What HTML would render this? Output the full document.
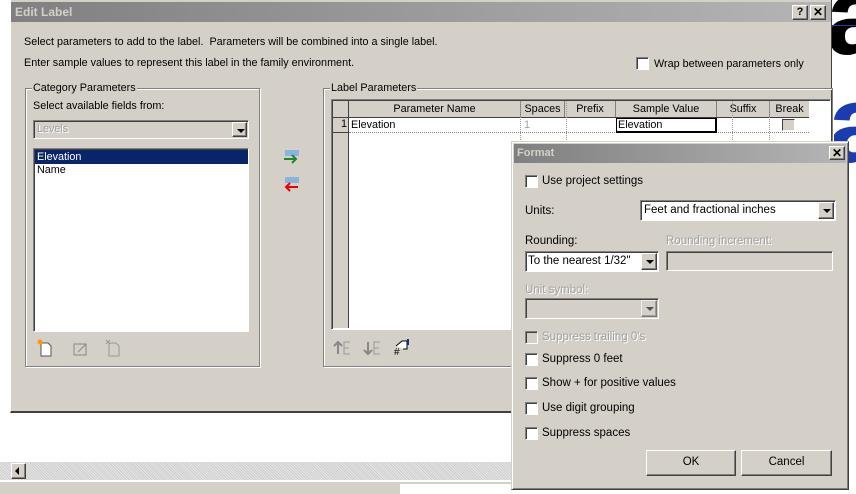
<!DOCTYPE html>
<html><head><style>
*{box-sizing:border-box;margin:0;padding:0}
body{width:856px;height:494px;overflow:hidden;background:#fff;position:relative;font-family:"Liberation Sans",sans-serif;font-size:10.8px;color:#000}
.a{position:absolute}
.sunk{border:1px solid;border-color:#808080 #fff #fff #808080;box-shadow:inset 1px 1px 0 #404040}
.raised{border:1px solid;border-color:#fff #404040 #404040 #fff;background:#d4d0c8;box-shadow:inset -1px -1px 0 #808080}
.grp{border:1px solid #808080;box-shadow:1px 1px 0 #fff, inset 1px 1px 0 #fff}
.lg{position:absolute;top:-7px;left:6px;background:#d4d0c8;padding:0 1px}
.cb{position:absolute;width:13px;height:13px;background:#fff;border:1px solid;border-color:#808080 #fff #fff #808080;box-shadow:inset 1px 1px 0 #404040}
.f{font-size:11.5px}
.dis{color:#a0a0a0;text-shadow:1px 1px 0 #fff}
.arr{position:absolute;width:16px;height:17px;top:1px;right:1px}
.arr:after{content:"";position:absolute;left:4px;top:6px;border:4px solid transparent;border-top:4px solid #000;border-bottom:0}
</style></head><body>
<div class="a" style="left:832px;top:0;width:24px;height:62px;overflow:hidden"><div class="a" style="left:-6px;top:-38px;font:bold 110px 'Liberation Sans';color:#000;line-height:110px">a</div></div>
<div class="a" style="left:832px;top:25px;width:24px;height:1px;background:#1a3cb0"></div>
<div class="a" style="left:832px;top:95px;width:24px;height:70px;overflow:hidden"><div class="a" style="left:-4px;top:-25px;font:bold 110px 'Liberation Sans';color:#1a3cb0;line-height:110px">a</div></div>
<div class="a" style="left:0;top:462px;width:511px;height:18px;background:repeating-linear-gradient(45deg,#e4e4e4 0 1px,#cfcfcf 1px 2px)"></div>
<div class="a raised" style="left:11px;top:463px;width:15px;height:16px"></div>
<div class="a" style="left:15px;top:467px;border:4px solid transparent;border-right:4px solid #000;border-left:0"></div>
<div class="a" style="left:0;top:481px;width:511px;height:13px;background:#d4d0c8;border-top:1px solid #fff"></div>
<div class="a" style="left:400px;top:484px;width:111px;height:10px;background:#fff"></div>

<div class="a" style="left:10px;top:0;width:822px;height:413px;background:#d4d0c8;border-right:1px solid #404040;border-bottom:2px solid #404040;border-left:1px solid #fff"></div>
<div class="a" style="left:11px;top:2px;width:820px;height:20px;background:linear-gradient(90deg,#808080,#b5b5b5);color:#d4d0c8;font-weight:bold;padding:3px 0 0 4px;font-size:12px">Edit Label</div>
<div class="a raised" style="left:792px;top:5px;width:16px;height:15px;font-weight:bold;text-align:center;line-height:12px;font-size:11px">?</div>
<div class="a raised" style="left:810px;top:5px;width:16px;height:15px;font-weight:bold;text-align:center;line-height:12px;font-size:12px">✕</div>
<div class="a" style="left:24px;top:36px">Select parameters to add to the label.&nbsp; Parameters will be combined into a single label.</div>
<div class="a" style="left:24px;top:57px">Enter sample values to represent this label in the family environment.</div>
<div class="cb" style="left:636px;top:57px"></div>
<div class="a" style="left:654px;top:58px">Wrap between parameters only</div>

<div class="a grp" style="left:25px;top:88px;width:235px;height:279px"><span class="lg">Category Parameters</span></div>
<div class="a" style="left:33px;top:100px">Select available fields from:</div>
<div class="a sunk" style="left:33px;top:120px;width:216px;height:19px;background:#d4d0c8;padding:2px 3px" ><span class="dis">Levels</span><div class="raised arr" style="width:15px;height:15px"></div></div>
<div class="a sunk" style="left:33px;top:148px;width:216px;height:184px;background:#fff">
<div style="background:#0a246a;color:#fff;margin:1px 0 0 1px;padding:1px 2px;height:14px">Elevation</div>
<div style="padding:0 3px">Name</div></div>
<svg class="a" style="left:36px;top:339px" width="100" height="20">
<path d="M5 4h7l3 3v10H5z" fill="#fff" stroke="#555"/><circle cx="4" cy="3" r="2.5" fill="#f90"/>
<rect x="38" y="5" width="12" height="11" fill="none" stroke="#888"/><path d="M42 13l8-8" stroke="#888"/>
<path d="M73 4h7l3 3v10H73z" fill="none" stroke="#999"/><path d="M70 1l4 4M74 1l-4 4" stroke="#999"/>
</svg>
<svg class="a" style="left:283px;top:148px" width="20" height="45">
<rect x="2" y="2" width="14" height="6" fill="#8ab4e0"/><path d="M1 11h12M9 7l4 4-4 4" stroke="#1a8a2a" stroke-width="2" fill="none"/>
<rect x="2" y="29" width="14" height="6" fill="#8ab4e0"/><path d="M15 39H3M7 35l-4 4 4 4" stroke="#e00" stroke-width="2" fill="none"/>
</svg>

<div class="a grp" style="left:323px;top:88px;width:510px;height:279px"><span class="lg">Label Parameters</span></div>
<div class="a sunk" style="left:331px;top:99px;width:500px;height:231px;background:#fff"></div>
<div class="a" style="left:333px;top:101px;width:16px;height:227px;background:#d4d0c8;border-right:1px solid #404040"></div>
<div class="a" style="left:349px;top:101px;width:460px;height:17px;background:#d4d0c8;border-bottom:1px solid #404040;display:flex">
<div style="width:172px;text-align:center;border-right:1px solid #808080;padding-top:2px">Parameter Name</div>
<div style="width:44px;text-align:center;border-right:1px solid #808080;padding-top:2px">Spaces</div>
<div style="width:51px;text-align:center;border-right:1px solid #808080;padding-top:2px">Prefix</div>
<div style="width:101px;text-align:center;border-right:1px solid #808080;padding-top:2px">Sample Value</div>
<div style="width:53px;text-align:center;border-right:1px solid #808080;padding-top:2px">Suffix</div>
<div style="width:39px;text-align:center;padding-top:2px">Break</div></div>
<div class="a" style="left:333px;top:101px;width:16px;height:17px;border-bottom:1px solid #404040"></div>
<div class="a" style="left:333px;top:118px;width:16px;height:15px;text-align:right;padding-right:2px;border-bottom:1px solid #404040">1</div>
<div class="a" style="left:349px;top:118px;width:460px;height:15px;border-bottom:1px dotted #808080">
<span class="a" style="left:2px;top:1px">Elevation</span>
<span class="a dis" style="left:175px;top:1px">1</span>
<div class="a" style="left:267px;top:0;width:101px;height:15px;border:1px solid #000;border-right-width:2px;border-bottom-width:2px;padding-left:1px">Elevation</div>
<div class="a" style="left:433px;top:1px;width:13px;height:12px;border:1px solid;border-color:#404040 #fff #fff #404040;background:#d4d0c8"></div>
</div>
<div class="a" style="left:520px;top:101px;width:1px;height:227px;border-left:1px dotted #999"></div>
<div class="a" style="left:566px;top:101px;width:1px;height:227px;border-left:1px dotted #999"></div>
<div class="a" style="left:732px;top:101px;width:1px;height:227px;border-left:1px dotted #999"></div>
<div class="a" style="left:769px;top:101px;width:1px;height:227px;border-left:1px dotted #999"></div>
<svg class="a" style="left:333px;top:338px" width="90" height="20">
<path d="M5 4v12M1 8l4-4 4 4" stroke="#888" stroke-width="2" fill="none"/><path d="M17 4h-6v12h6M11 10h5" stroke="#999" fill="none"/>
<path d="M35 4v12M31 12l4 4 4-4" stroke="#888" stroke-width="2" fill="none"/><path d="M47 4h-6v12h6M41 10h5" stroke="#999" fill="none"/>
<path d="M63 8l6-5h5v8h-4" stroke="#000" fill="#fff"/><rect x="74" y="1" width="2" height="6" fill="#1a2a8a"/><text x="61" y="17" font-size="10">#</text>
</svg>

<div class="a" style="left:511px;top:141px;width:338px;height:349px;background:#d4d0c8;border:1px solid;border-color:#d4d0c8 #404040 #404040 #d4d0c8;box-shadow:inset 1px 1px 0 #fff,inset -1px -1px 0 #808080"></div>
<div class="a" style="left:514px;top:144px;width:332px;height:19px;background:linear-gradient(90deg,#808080,#b5b5b5);color:#d4d0c8;font-weight:bold;padding:3px 0 0 3px;font-size:11px">Format</div>
<div class="a raised" style="left:829px;top:146px;width:16px;height:14px;font-weight:bold;text-align:center;line-height:12px;font-size:12px">✕</div>
<div class="f">
<div class="cb" style="left:525px;top:175px"></div><div class="a" style="left:542px;top:175px">Use project settings</div>
<div class="a" style="left:525px;top:205px">Units:</div>
<div class="a sunk" style="left:640px;top:200px;width:196px;height:21px;background:#fff;padding:3px 3px">Feet and fractional inches<div class="raised arr"></div></div>
<div class="a" style="left:525px;top:235px">Rounding:</div>
<div class="a dis" style="left:666px;top:235px">Rounding increment:</div>
<div class="a sunk" style="left:525px;top:251px;width:134px;height:21px;background:#fff;padding:3px 2px">To the nearest 1/32"<div class="raised arr"></div></div>
<div class="a sunk" style="left:666px;top:251px;width:167px;height:20px;background:#d4d0c8"></div>
<div class="a dis" style="left:525px;top:284px">Unit symbol:</div>
<div class="a sunk" style="left:525px;top:298px;width:134px;height:21px;background:#d4d0c8"><div class="raised arr" style="opacity:.6"></div></div>
<div class="cb" style="left:525px;top:331px;background:#d4d0c8"></div><div class="a dis" style="left:542px;top:331px">Suppress trailing 0's</div>
<div class="cb" style="left:525px;top:353px"></div><div class="a" style="left:542px;top:353px">Suppress 0 feet</div>
<div class="cb" style="left:525px;top:377px"></div><div class="a" style="left:542px;top:377px">Show + for positive values</div>
<div class="cb" style="left:525px;top:402px"></div><div class="a" style="left:542px;top:402px">Use digit grouping</div>
<div class="cb" style="left:525px;top:427px"></div><div class="a" style="left:542px;top:427px">Suppress spaces</div>
<div class="a raised" style="left:646px;top:450px;width:90px;height:26px;text-align:center;line-height:23px">OK</div>
<div class="a raised" style="left:741px;top:450px;width:91px;height:26px;text-align:center;line-height:23px">Cancel</div>
</div>
</body></html>
